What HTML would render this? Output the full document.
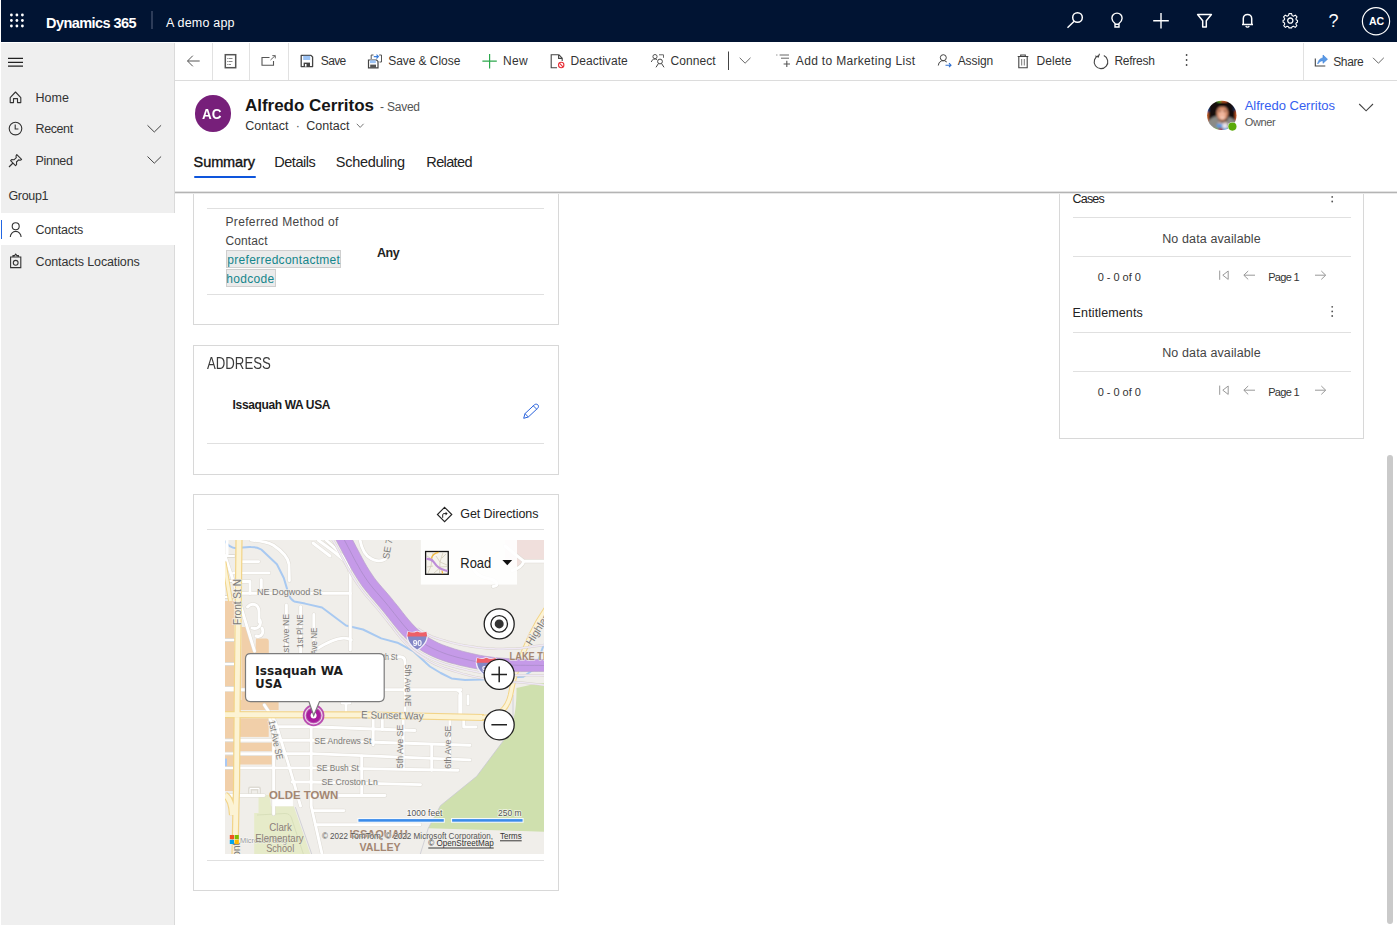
<!DOCTYPE html>
<html lang="en">
<head>
<meta charset="utf-8">
<title>Contact: Alfredo Cerritos - Dynamics 365</title>
<style>
*{box-sizing:border-box;margin:0;padding:0}
html,body{width:1397px;height:925px;overflow:hidden;background:#fff}
body{font-family:"Liberation Sans",sans-serif;color:#333;position:relative;font-size:13px}
.abs,.t,svg.i{position:absolute}
.t{white-space:nowrap;line-height:1;color:#333}
#top{position:absolute;left:1px;top:0;width:1396px;height:42px;background:#011433}
#side{position:absolute;left:1px;top:43px;width:174px;height:882px;background:#efefef;border-right:1px solid #dadada}
#side .sel{position:absolute;left:0;top:170px;width:174px;height:32px;background:#fff}
#side .selbar{position:absolute;left:0;top:177px;width:1px;height:19px;background:#2266e3}
#cmd{position:absolute;left:175px;top:43px;width:1222px;height:38px;background:#fff;border-bottom:1px solid #dcdcdc}
.vsep{position:absolute;top:43px;width:1px;height:37px;background:#e1e1e1}
#hdrshadow{position:absolute;left:175px;top:191px;width:1222px;height:3px;background:linear-gradient(#e3e3e3 0,#e3e3e3 33%,#b4b4b4 33%,#b4b4b4 66%,#e9e9e9 66%)}
.card{position:absolute;background:#fff;border:1px solid #d8d8d8}
.hl{position:absolute;height:1px;background:#e0e0e0}
.cb{font-size:12.5px;color:#333}
.nav{font-size:13px;color:#333}
</style>
</head>
<body>
<!-- TOP BAR -->
<div id="top"></div>
<!-- SIDEBAR -->
<div id="side"><div class="sel"></div><div class="selbar"></div></div>
<!-- COMMAND BAR -->
<div id="cmd"></div>
<div id="hdrshadow"></div>
<!--TOPCONTENT-->
<svg class="i" style="left:0;top:0" width="1397" height="44" viewBox="0 0 1397 44" fill="none" stroke="#fff" stroke-width="1.5">
<g fill="#fff" stroke="none">
<circle cx="11.4" cy="15" r="1.4"/><circle cx="16.9" cy="15" r="1.4"/><circle cx="22.4" cy="15" r="1.4"/>
<circle cx="11.4" cy="20.5" r="1.4"/><circle cx="16.9" cy="20.5" r="1.4"/><circle cx="22.4" cy="20.5" r="1.4"/>
<circle cx="11.4" cy="26" r="1.4"/><circle cx="16.9" cy="26" r="1.4"/><circle cx="22.4" cy="26" r="1.4"/>
</g>
<rect x="151.5" y="11" width="1" height="18" fill="#5a6580" stroke="none"/>
<!-- search -->
<circle cx="1077.5" cy="17.5" r="4.8"/><path d="M1074.2 21.2 L1067.5 27.8"/>
<!-- bulb -->
<path d="M1115 23.600 C1113 21.800 1111.900 20.200 1111.900 18.200 A5.100 5.100 0 0 1 1122.100 18.200 C1122.100 20.200 1121 21.800 1119 23.600 V27 H1115 Z M1115 24.300 H1119" stroke-width="1.400"/>
<!-- plus -->
<path d="M1161 13 V28.5 M1153.2 20.8 H1168.8" stroke-width="1.4"/>
<!-- filter -->
<path d="M1197.6 14.5 H1211.4 L1206.3 20.8 V27 H1202.7 V20.8 Z" stroke-linejoin="round"/>
<!-- bell -->
<path d="M1243.3 24.3 V18.6 A4.2 4.2 0 0 1 1251.700 18.6 V24.3 M1242 24.6 H1253" /><path d="M1245.8 26 A1.8 1.8 0 0 0 1249.2 26" stroke-width="1.3"/>
<!-- gear -->
<g transform="translate(1290.3 20.6)" stroke-width="1.3"><circle r="2.6"/><path d="M-1.3 -7 H1.3 L1.8 -5 L3.2 -4.4 L5 -5.5 L6.7 -3.7 L5.6 -1.9 L6.1 -0.6 L7.2 -0.3 V1.6 L6.1 2 L5.5 3.4 L6.6 5.1 L4.9 6.8 L3.2 5.7 L1.8 6.2 L1.3 7.3 H-1.3 L-1.8 6.2 L-3.2 5.7 L-4.9 6.8 L-6.6 5.1 L-5.5 3.4 L-6.1 2 L-7.2 1.6 V-0.3 L-6.1 -0.6 L-5.6 -1.9 L-6.7 -3.7 L-5 -5.5 L-3.2 -4.4 L-1.8 -5 Z" stroke-linejoin="round" stroke-width="1.1"/></g>
<!-- avatar ring -->
<circle cx="1376" cy="21.3" r="13.6" stroke-width="1.2"/>
</svg>
<span class="t" style="left:46px;top:15.8px;font-size:14.5px;font-weight:bold;color:#fff;letter-spacing:-0.56px">Dynamics 365</span>
<span class="t" style="left:166px;top:16.8px;font-size:12.5px;color:#fff;letter-spacing:.2px">A demo app</span>
<span class="t" style="left:1328.500px;top:11.500px;font-size:18px;color:#fff">?</span>
<span class="t" style="left:1369px;top:16.300px;font-size:10.500px;font-weight:bold;color:#fff;letter-spacing:-.2px">AC</span>
<!--/TOPCONTENT-->
<!--SIDECONTENT-->
<svg class="i" style="left:0;top:44px" width="175" height="240" viewBox="0 44 175 240" fill="none" stroke="#333" stroke-width="1.1">
<!-- hamburger -->
<path d="M8 58.4 H23 M8 62.3 H23 M8 66.2 H23" stroke="#222" stroke-width="1.3"/>
<!-- home -->
<path d="M10.2 97.6 L15.5 92 L20.8 97.6 V102.6 H17.5 V98.6 H13.5 V102.6 H10.2 Z" stroke-linejoin="round"/>
<!-- clock -->
<circle cx="15.5" cy="128.6" r="6.3"/><path d="M15.2 124.6 V129 H18.4"/>
<!-- pin -->
<path d="M16.8 154.6 L21.6 159.4 L20.2 160.2 L18.6 159.9 L16.5 162 L16.6 164.6 L15.5 165.6 L10.6 160.6 L11.6 159.6 L14.2 159.7 L16.3 157.6 L16 156 Z M13 163 L9 167" stroke-linejoin="round"/>
<!-- chevrons -->
<path d="M147.5 125.3 L154.3 132 L161.100 125.3 M147.5 156.5 L154.3 163.2 L161.100 156.5" stroke="#444" stroke-width="1"/>
<!-- person -->
<circle cx="15.700" cy="226.300" r="3.5"/><path d="M10.3 237 A5.4 5.6 0 0 1 21.100 237"/>
<!-- clipboard -->
<path d="M10.6 257 H20.8 V267.6 H10.6 Z M13 257 V255.600 H14.500 L15.700 254.200 L16.900 255.600 H18.400 V257"/><circle cx="15.700" cy="262.800" r="2.400"/>
</svg>
<span class="t nav" style="left:35.5px;top:91.500px;font-size:12.5px">Home</span>
<span class="t nav" style="left:35.5px;top:123px;font-size:12.5px;letter-spacing:-.4px">Recent</span>
<span class="t nav" style="left:35.5px;top:154.500px;font-size:12.5px;letter-spacing:-.3px">Pinned</span>
<span class="t nav" style="left:8.500px;top:189.500px;font-size:12.5px;letter-spacing:-.35px">Group1</span>
<span class="t nav" style="left:35.5px;top:224.300px;font-size:12.5px;letter-spacing:-.22px">Contacts</span>
<span class="t nav" style="left:35.5px;top:255.800px;font-size:12.5px;letter-spacing:-.12px">Contacts Locations</span>
<!--/SIDECONTENT-->
<!--CMDCONTENT-->
<div class="vsep" style="left:212px"></div><div class="vsep" style="left:249px"></div><div class="vsep" style="left:288px"></div><div class="vsep" style="left:1303px"></div>
<svg class="i" style="left:175px;top:44px" width="1222" height="37" viewBox="175 44 1222 37" fill="none" stroke="#444" stroke-width="1">
<!-- back -->
<path d="M199.700 61 H187.600 M192.800 55.700 L187.500 61 L192.800 66.300" stroke="#555" stroke-width="1"/>
<!-- doc -->
<rect x="225.300" y="54.700" width="10.400" height="13" stroke="#555" stroke-width="1.5"/><path d="M228.500 58.500 H232.500 M228.500 61.500 H232.500 M228.500 64.500 H231 M227 58.500 h.8 M227 61.500 h.8 M227 64.500 h.8" stroke="#888" stroke-width="1"/>
<!-- popout -->
<path d="M269.500 57.500 H262 V65.300 H273.500 V61" stroke="#555" stroke-width="1.100"/><path d="M270.500 60 L275.200 55.600 M272.300 55.600 H275.300 V58.400" stroke="#666" stroke-width="1"/>
<!-- save -->
<path d="M301.200 55.400 H311 L312.600 57 V66.600 H301.200 Z" stroke="#444" stroke-width="1.300" stroke-linejoin="round"/><rect x="303.200" y="55.800" width="7" height="4.200" fill="#9cc3f5" stroke="none"/><rect x="303.600" y="62.600" width="6.400" height="4" fill="#444" stroke="none"/><rect x="305" y="64" width="1.500" height="2.600" fill="#fff" stroke="none"/>
<!-- save & close -->
<path d="M368.500 60 H376.600 L378 61.400 V67.800 H368.500 Z" stroke="#444" stroke-width="1.200"/><rect x="370" y="60.300" width="5.800" height="2.800" fill="#9cc3f5" stroke="none"/><rect x="370.200" y="64.600" width="5.800" height="3.200" fill="#555" stroke="none"/>
<path d="M371.200 59 V55 H373.500 M379.200 55 H381.500 V62 H379.500" stroke="#555" stroke-width="1"/><path d="M373.800 56.600 H378.200 M376.500 54.700 L378.400 56.600 L376.500 58.500" stroke="#3b7edb" stroke-width="1.100"/>
<!-- new -->
<path d="M489.600 54 V68.400 M482.400 61.200 H496.800" stroke="#2ca84c" stroke-width="1.200"/>
<!-- deactivate -->
<path d="M558.800 54.700 H551.200 V67.800 H557 M558.800 54.700 L562.200 58.200 V61 M558.600 54.900 V58.400 H562" stroke="#444" stroke-width="1.100"/><circle cx="561.200" cy="65" r="2.700" stroke="#e8313a" stroke-width="1.100"/><path d="M559.400 63.200 L563 66.800" stroke="#e8313a" stroke-width="1.100"/>
<!-- connect -->
<circle cx="655" cy="56.600" r="2.100" stroke="#555"/><path d="M651.300 62 A3.700 3.400 0 0 1 657 59.600" stroke="#555"/><circle cx="660" cy="61.500" r="2.400" stroke="#444"/><path d="M656 67.300 L658.400 63.600 M664 67.300 L661.600 63.600" stroke="#444"/><path d="M659 54.800 H663.500 V57.800" stroke="#666"/>
<rect x="728" y="51.500" width="1" height="18.500" fill="#444" stroke="none"/>
<path d="M739.700 57.800 L745.100 63.200 L750.500 57.800" stroke="#666" stroke-width="1"/>
<!-- add to marketing list -->
<path d="M779.600 55 H789 M781 58.200 H789" stroke="#666" stroke-width="1"/><path d="M776 55 h1.500" stroke="#999"/><path d="M786.800 60.800 V67 M783.600 64 H790" stroke="#555" stroke-width="1.100"/>
<!-- assign -->
<circle cx="943.300" cy="57.700" r="3" stroke="#444"/><path d="M938.300 65.500 A5 5 0 0 1 946.800 62" stroke="#444"/><path d="M945.500 65.200 H951 M949 63.200 L951 65.200 L949 67.200" stroke="#2f6fd0" stroke-width="1.100"/>
<!-- delete -->
<path d="M1017.700 56.500 H1028.300 M1020.700 56.300 V55 H1025.300 V56.300 M1018.800 56.800 V67.700 H1027.200 V56.800" stroke="#444" stroke-width="1.100"/><path d="M1021.700 59 V65.500 M1024.300 59 V65.500" stroke="#777" stroke-width="1"/>
<!-- refresh -->
<path d="M1098.700 55.400 A6.800 6.800 0 1 0 1103.800 55.600" stroke="#444" stroke-width="1.100"/><path d="M1098.300 53.500 V57 H1095" stroke="#444" stroke-width="1" transform="rotate(20 1098.300 57)"/>
<!-- more -->
<g fill="#444" stroke="none"><circle cx="1186.600" cy="55" r="0.900"/><circle cx="1186.600" cy="60" r="0.900"/><circle cx="1186.600" cy="65" r="0.900"/></g>
<!-- share -->
<path d="M1315.300 58.500 V66 H1325.300" stroke="#444" stroke-width="1.100"/><path d="M1317.700 64 C1318.300 60 1320.500 58.200 1323 58 V55 L1327.500 59.200 L1323 63.300 V60.700 C1321 60.700 1319.200 61.700 1317.700 64 Z" fill="#5a9ae6" stroke="#3c7fd6" stroke-width=".6"/>
<path d="M1373 57.800 L1378.400 63.200 L1383.800 57.800" stroke="#666" stroke-width="1"/>
</svg>
<span class="t cb" style="left:320.8px;top:54.9px;font-size:12px;letter-spacing:-0.62px">Save</span>
<span class="t cb" style="left:388.2px;top:54.9px;font-size:12px;letter-spacing:-0.05px">Save &amp; Close</span>
<span class="t cb" style="left:503.1px;top:54.9px;font-size:12px;letter-spacing:0.30px">New</span>
<span class="t cb" style="left:570.5px;top:54.9px;font-size:12px;letter-spacing:0.06px">Deactivate</span>
<span class="t cb" style="left:670.6px;top:54.9px;font-size:12px;letter-spacing:0.05px">Connect</span>
<span class="t cb" style="left:795.8px;top:54.9px;font-size:12px;letter-spacing:0.33px">Add to Marketing List</span>
<span class="t cb" style="left:957.7px;top:54.9px;font-size:12px;letter-spacing:-0.10px">Assign</span>
<span class="t cb" style="left:1036.5px;top:54.9px;font-size:12px;letter-spacing:0.04px">Delete</span>
<span class="t cb" style="left:1114.4px;top:54.9px;font-size:12px;letter-spacing:-0.24px">Refresh</span>
<span class="t cb" style="left:1333.2px;top:55.5px;font-size:12px;letter-spacing:-0.36px">Share</span>
<!--/CMDCONTENT-->
<!--HEADER-->
<div class="abs" style="left:194.600px;top:95px;width:36.600px;height:36.600px;border-radius:50%;background:#771f7a"></div>
<span class="t" style="left:202.200px;top:106.200px;font-size:15.5px;font-weight:bold;color:#fff;transform:scaleX(.87);transform-origin:0 0">AC</span>
<span class="t" style="left:245px;top:96.700px;font-size:17px;font-weight:bold;color:#161616;letter-spacing:-.03px">Alfredo Cerritos</span>
<span class="t" style="left:380px;top:100.800px;font-size:12px;color:#555;letter-spacing:-.22px">- Saved</span>
<span class="t" style="left:245.300px;top:119.600px;font-size:12.5px;color:#333">Contact</span>
<span class="t" style="left:295.700px;top:119.600px;font-size:12.5px;color:#555">·</span>
<span class="t" style="left:306.300px;top:119.600px;font-size:12.5px;color:#333">Contact</span>
<svg class="i" style="left:355px;top:121px" width="12" height="10" viewBox="355 121 12 10" fill="none" stroke="#777" stroke-width="1"><path d="M356.800 123.800 L360.200 127.400 L363.600 123.800"/></svg>
<span class="t" style="left:193.600px;top:155px;font-size:14.5px;color:#111;letter-spacing:-.1px;-webkit-text-stroke:.35px #111">Summary</span>
<span class="t" style="left:274.200px;top:155px;font-size:14.5px;color:#222;letter-spacing:-.45px">Details</span>
<span class="t" style="left:335.800px;top:155px;font-size:14.5px;color:#222;letter-spacing:-.27px">Scheduling</span>
<span class="t" style="left:426.300px;top:155px;font-size:14.5px;color:#222;letter-spacing:-.63px">Related</span>
<div class="abs" style="left:194px;top:176px;width:62px;height:2px;background:#0e55dc;border-radius:1px"></div>
<!-- owner -->
<svg class="i" style="left:1204px;top:98px" width="36" height="36" viewBox="1204 98 36 36">
<defs><clipPath id="pc"><circle cx="1221.800" cy="115.400" r="14.700"/></clipPath><filter id="pb" x="-10%" y="-10%" width="120%" height="120%"><feGaussianBlur stdDeviation="0.800"/></filter></defs>
<g clip-path="url(#pc)"><g filter="url(#pb)">
<rect x="1202" y="96" width="40" height="40" fill="#130f0f"/>
<rect x="1205.500" y="112" width="3" height="11" fill="#e07030"/><rect x="1205.500" y="106" width="3" height="6" fill="#2f66b8"/>
<rect x="1235.200" y="111" width="3" height="10" fill="#d8622a"/><rect x="1233.500" y="105" width="3" height="6" fill="#1e2f55"/>
<rect x="1217.500" y="99.500" width="3.500" height="2.600" fill="#6cc030"/><rect x="1221" y="99.500" width="6" height="2.600" fill="#d8602a"/>
<path d="M1206 131 L1208 121 C1211 118 1214 116.500 1217 116 L1220 124 L1226 124 L1228 117 C1231 117.500 1234 119 1236.500 122 L1238 131 Z" fill="#8b8a86"/>
<ellipse cx="1222.300" cy="113.600" rx="5.700" ry="7.400" fill="#d9906e"/>
<ellipse cx="1222" cy="114.500" rx="3.200" ry="4.500" fill="#f0b59c"/>
<path d="M1215 111 C1214.500 105 1217 103 1222.500 103.200 C1228 103.200 1230 105.500 1229.600 111 C1228.500 107.800 1226.500 106.600 1222.300 106.800 C1218 106.700 1216.200 108 1215 111 Z" fill="#120d0c"/>
<path d="M1219.500 117 Q1222.500 120 1225.500 117 Q1222.500 118.600 1219.500 117Z" fill="#fff"/><ellipse cx="1219.900" cy="111.300" rx="1.300" ry=".7" fill="#5a3324"/><ellipse cx="1224.700" cy="111.300" rx="1.300" ry=".7" fill="#5a3324"/>
<path d="M1218.500 120.500 L1222.500 122.500 L1226.500 120.500 L1227 126 L1218 126 Z" fill="#c9a898"/>
<rect x="1217" y="123.800" width="5.500" height="3.600" fill="#4f9be8"/><rect x="1222.500" y="123.500" width="5" height="5" fill="#e8e4f0"/>
<rect x="1214" y="128.600" width="4" height="2.500" fill="#6cc030"/><rect x="1218" y="128.600" width="5" height="2.500" fill="#a01840"/><rect x="1223" y="128.600" width="5" height="2.500" fill="#2a9be8"/>
</g></g>
<circle cx="1232.400" cy="126.600" r="4.700" fill="#fff" opacity=".85"/>
<circle cx="1232.400" cy="126.600" r="4.100" fill="#5bab08"/>
</svg>
<svg class="i" style="left:1355px;top:100px" width="22" height="14" viewBox="1355 100 22 14"><path d="M1359.200 104 L1366.100 110.800 L1373 104" fill="none" stroke="#444" stroke-width="1.100"/></svg>
<span class="t" style="left:1244.700px;top:98.500px;font-size:13px;color:#3560f0">Alfredo Cerritos</span>
<span class="t" style="left:1244.700px;top:117px;font-size:11px;color:#555;letter-spacing:-.33px">Owner</span>
<!--/HEADER-->
<!--CARDS-->
<!-- card 1 (scrolled) -->
<div class="card" style="left:193px;top:194px;width:365.500px;height:131px;border-top:none"></div>
<div class="hl" style="left:206.500px;top:208px;width:337.500px"></div>
<span class="t" style="left:225.500px;top:215.700px;font-size:12px;color:#444;letter-spacing:.34px">Preferred Method of</span>
<span class="t" style="left:225.500px;top:234.600px;font-size:12px;color:#444;letter-spacing:.12px">Contact</span>
<div class="abs" style="left:225.500px;top:249.700px;width:115.500px;height:18.300px;background:#ebebeb;border:1px solid #cfcfcf"></div>
<div class="abs" style="left:225.500px;top:268.800px;width:50px;height:18.200px;background:#ebebeb;border:1px solid #cfcfcf"></div>
<span class="t" style="left:227.300px;top:254px;font-size:12px;color:#14868c;letter-spacing:.29px">preferredcontactmet</span>
<span class="t" style="left:226.300px;top:272.800px;font-size:12px;color:#14868c;letter-spacing:.3px">hodcode</span>
<span class="t" style="left:377px;top:246.700px;font-size:12.5px;font-weight:bold;color:#222;letter-spacing:-.5px">Any</span>
<div class="hl" style="left:206.500px;top:294px;width:337.500px"></div>
<!-- card 2 -->
<div class="card" style="left:193px;top:345px;width:365.500px;height:130px"></div>
<span class="t" style="left:206.600px;top:356px;font-size:16.600px;color:#3a3a3a;transform:scaleX(.795);transform-origin:0 0">ADDRESS</span>
<span class="t" style="left:232.600px;top:398.600px;font-size:12px;font-weight:bold;color:#1b1b1b;letter-spacing:-.36px">Issaquah WA USA</span>
<svg class="i" style="left:520px;top:401px" width="22" height="21" viewBox="520 401 22 21" fill="none" stroke="#2a63dc" stroke-width="1"><path d="M523.700 418.300 L525 413.600 L534.300 404.900 C535.500 403.800 537.200 404 538 405 C538.800 406 538.600 407.400 537.600 408.300 L528.300 417 Z M525 413.600 L528.300 417 M533.300 405.800 L536.700 409.200"/></svg>
<div class="hl" style="left:206.500px;top:443px;width:337.500px"></div>
<!-- card 3 -->
<div class="card" style="left:193px;top:494px;width:365.500px;height:397px"></div>
<svg class="i" style="left:435px;top:505px" width="20" height="20" viewBox="435 505 20 20" fill="none" stroke="#222" stroke-width="1.100"><path d="M444.600 507.300 L451.800 514.500 L444.600 521.700 L437.400 514.500 Z"/><path d="M442.700 517.800 V514.800 Q442.700 513.600 443.900 513.600 H446.500" stroke-width="1"/><path d="M445.600 511.800 L447.600 513.600 L445.600 515.400 Z" fill="#222" stroke="none"/></svg>
<span class="t" style="left:460.300px;top:507.900px;font-size:12.5px;color:#222;letter-spacing:-.08px">Get Directions</span>
<div class="hl" style="left:206.500px;top:529px;width:337.500px"></div>
<div class="hl" style="left:206.500px;top:860px;width:337.500px"></div>
<!--/CARDS-->
<!--MAP-->
<svg class="i" style="left:225px;top:540px" width="319" height="314" viewBox="225 540 319 314" font-family="Liberation Sans, sans-serif">
<defs><clipPath id="mc"><rect x="225" y="540" width="319" height="314"/></clipPath>
<filter id="soft" x="-5%" y="-5%" width="110%" height="110%"><feGaussianBlur stdDeviation="0.35"/></filter></defs>
<g clip-path="url(#mc)">
<g filter="url(#soft)">
<rect x="225" y="540" width="319" height="314" fill="#f0eeea"/>
<!-- land use -->
<path d="M516.500 688 C516.500 700 516 710 513 721 L502.600 741.700 L476.700 776.300 L440.400 805.700 L428.300 828.200 L544.200 831.700 V683 L530 685 Z" fill="#cfe0ae"/>
<path d="M505 540 H544 V561.500 H524 Q521 567 515 570 L505 560 Z" fill="#f0dfdc"/>
<path d="M254.200 813 H258.500 V795 H269.700 L271 806.200 H293.700 L311 856 H254.200 Z" fill="#e6ebc9"/><path d="M257 815 L285 813.500 Q290 813.500 291.500 818 L304 856" fill="none" stroke="#d4dcb6" stroke-width=".8"/>
<g fill="#f1cfa9"><rect x="225" y="601" width="9" height="190"/><path d="M256 638.400 H266 Q268.800 638.400 268.800 641.500 V702 H241.500 V627 H249 L255.300 653 Z"/><rect x="239" y="700" width="39.600" height="10"/><rect x="239.700" y="718.400" width="29" height="18.500"/><rect x="239.700" y="742.700" width="33" height="8.400"/><rect x="239.700" y="756" width="32.500" height="8.500"/></g>
<!-- creek -->
<path d="M225 541 C228 546 231 548 236.200 548.200 C242 548 246 546.500 251 547 C256 547 259 548 261.300 549.500 L276.900 564.200 L283.800 578 L289 595.400 Q291 600 294.200 601.400 L305 603.600 L322 607.500 L334 616.500 L346 625.500 L363 629.500 L381.200 638.400 L397.400 642.700 L413.600 651.400 L429.900 666.500 L440.700 673 L451.500 678.400 L465 680 L481.900 679.400 L523.400 676.700 L535.500 668 L544 644" fill="none" stroke="#a8c9f1" stroke-width="2" stroke-linejoin="round"/>
<rect x="225" y="758.600" width="2" height="10" fill="#a9c8f5"/>
<!-- rail -->
<path d="M513 695 V721 L502.600 741.700 L476.700 776.300 L440.400 805.700 L428.300 828.200 L420 855 M295.400 807.200 L312 855" fill="none" stroke="#c9c9d2" stroke-width=".8"/>
<!-- streets casing -->
<g fill="none" stroke="#dedbd4" stroke-width="3.900" stroke-linecap="round" stroke-linejoin="round">
<path d="M242 593.400 H350.300"/>
<path d="M318 540 C340 556 350.300 562 350.300 577 V650 M326 540 C340 552 348 560 350 572 M313 543 L330 556" />
<path d="M351.300 640 C345 636 335 637 315 650"/>
<path d="M251 540 C262 541 268 542 273.400 545.200 C282 551 288 557 289 564.200 L289.400 580.600"/>
<path d="M242.300 561.600 H258.700 M233.600 572.900 H269 M261.300 579.800 V588.400 M242.300 581.500 H250 V593.600 M225 555.600 L233 580 L245 620 L254.500 651"/>
<path d="M247.500 607 C252 602 259 604 259 612 V622 M252 628 C257 630 262 626 260 620 M256 636 C262 638 264 632 262 628"/>
<path d="M286.400 605 V655 M300.600 606.600 V655 M313.800 614.400 V655"/>
<path d="M384 656.800 H400 Q405 657 405 662 V714"/>
<path d="M225 689.700 H461 M455 689.700 Q461 689.700 461 696 V714 M468 696 V704"/>
<path d="M225 556 H234 M225 581 H234 M225 597 H234 M225 640 H234 M225 664 H234 M225 688 H234 M225 740.200 H234 M225 753.600 H234 M225 767.900 H234"/>
<path d="M239 740.200 H311 L470 745.200 M239 753.600 H311 L470 759.900 M239 767.900 H311 L458 770.300 M292 782 H311 L420.500 784.600 M225 795.500 H264 M311 795.500 H385 M312.500 810.600 H344 M315.500 824.800 H420"/>
<path d="M278.500 726.800 H311 L415 730.500"/>
<path d="M268 711 L272.500 728 Q273.600 736 273.600 742 V814"/>
<path d="M264.400 705 L275.300 721.800 L287.700 761.900 L294.500 784.600 L300.500 806"/>
<path d="M311.200 728 V806 L322.500 856 M346 705 V714 M342 703 H350 M361.700 756 V795"/>
<path d="M403.200 718 V768 M449.900 718 V768 M431.700 745.200 V770.300 M459.700 695 V714 M463.700 720 V727 H476"/>
<path d="M373.200 718.900 V744.700 M382.300 719 V729.500"/>
<path d="M250 793 V788.500 H259 V793"/>
<path d="M544 561.300 H524 L505 546 M524 561.300 Q521.500 568 512 570.500 M474 570 C480 580 492 577 496 582 Q499 586 493 586.500" />

<path d="M360 540 C362 550 366 556 370.800 558.400 C375 561 381 562 385.500 559"/>
</g>
<g fill="none" stroke="#fff" stroke-width="2.900" stroke-linecap="round" stroke-linejoin="round">
<path d="M242 593.400 H350.300"/>
<path d="M318 540 C340 556 350.300 562 350.300 577 V650 M326 540 C340 552 348 560 350 572 M313 543 L330 556" />
<path d="M351.300 640 C345 636 335 637 315 650"/>
<path d="M251 540 C262 541 268 542 273.400 545.200 C282 551 288 557 289 564.200 L289.400 580.600"/>
<path d="M242.300 561.600 H258.700 M233.600 572.900 H269 M261.300 579.800 V588.400 M242.300 581.500 H250 V593.600 M225 555.600 L233 580 L245 620 L254.500 651"/>
<path d="M247.500 607 C252 602 259 604 259 612 V622 M252 628 C257 630 262 626 260 620 M256 636 C262 638 264 632 262 628"/>
<path d="M286.400 605 V655 M300.600 606.600 V655 M313.800 614.400 V655"/>
<path d="M384 656.800 H400 Q405 657 405 662 V714"/>
<path d="M225 689.700 H461 M455 689.700 Q461 689.700 461 696 V714 M468 696 V704"/>
<path d="M225 556 H234 M225 581 H234 M225 597 H234 M225 640 H234 M225 664 H234 M225 688 H234 M225 740.200 H234 M225 753.600 H234 M225 767.900 H234" stroke-width="2"/>
<path d="M239 740.200 H311 L470 745.200 M239 753.600 H311 L470 759.900 M239 767.900 H311 L458 770.300 M292 782 H311 L420.500 784.600 M225 795.500 H264 M311 795.500 H385 M312.500 810.600 H344 M315.500 824.800 H420"/>
<path d="M278.500 726.800 H311 L415 730.500"/>
<path d="M268 711 L272.500 728 Q273.600 736 273.600 742 V814"/>
<path d="M264.400 705 L275.300 721.800 L287.700 761.900 L294.500 784.600 L300.500 806"/>
<path d="M311.200 728 V806 L322.500 856 M346 705 V714 M342 703 H350 M361.700 756 V795"/>
<path d="M403.200 718 V768 M449.900 718 V768 M431.700 745.200 V770.300 M459.700 695 V714 M463.700 720 V727 H476"/>
<path d="M373.200 718.900 V744.700 M382.300 719 V729.500"/>
<path d="M250 793 V788.500 H259 V793" stroke-width="1"/>
<path d="M544 561.300 H524 L505 546 M524 561.300 Q521.500 568 512 570.500 M474 570 C480 580 492 577 496 582 Q499 586 493 586.500" />

<path d="M360 540 C362 550 366 556 370.800 558.400 C375 561 381 562 385.500 559"/>
</g>
<rect x="274.800" y="798.400" width="18.100" height="7.800" fill="#fff"/>
<!-- yellow roads -->
<g fill="none" stroke-linecap="butt" stroke-linejoin="round">
<path d="M239 540 L237.200 700 L236.500 790 L236 805 L235 855 M225 795 C230 798 232 806 232.500 815 M225 714.700 L360 714.900 L484 717.500" stroke="#f2d488" stroke-width="7.200"/>
<path d="M239 540 L237.200 700 L236.500 790 L236 805 L235 855 M225 795 C230 798 232 806 232.500 815 M225 714.700 L360 714.900 L484 717.500" stroke="#fcf3d4" stroke-width="4.800"/>
<path d="M482 717.500 C499 717.500 507.500 708 510.500 695 C512.500 684 514.500 675 517.500 668 C522 655 530 632 546 609" stroke="#f2d488" stroke-width="5.400"/><path d="M482 717.500 C499 717.500 507.500 708 510.500 695 C512.500 684 514.500 675 517.500 668 C522 655 530 632 546 609" stroke="#fcf3d4" stroke-width="3.400"/>
<path d="M227 540 V556" stroke="#fff" stroke-width="3"/><path d="M224 562 L230.500 601" stroke="#f2d488" stroke-width="5"/><path d="M224 562 L230.500 601" stroke="#fcf3d4" stroke-width="3"/>
</g>
<path d="M330.0 535.3 L332.2 539.0 L334.4 542.8 L336.6 546.7 L338.7 550.7 L340.8 554.7 L342.9 558.8 L345.1 562.9 L347.3 567.1 L349.6 571.2 L352.0 575.4 L354.6 579.5 L357.2 583.6 L360.1 587.6 L363.0 591.6 L366.1 595.4 L369.2 599.0 L372.2 602.5 L375.2 605.9 L378.1 609.3 L380.9 612.7 L383.7 616.2 L386.5 619.8 L389.3 623.4 L392.3 627.1 L395.3 630.8 L398.5 634.5 L401.9 638.2 L405.5 641.7 L409.4 645.2 L413.5 648.4 L417.7 651.3 L422.1 654.0 L426.6 656.5 L431.1 658.7 L435.7 660.7 L440.4 662.5 L445.0 664.1 L449.7 665.5 L454.4 666.8 L459.0 668.0 L463.6 669.1 L468.2 670.2 L472.9 671.1 L477.6 672.0 L482.4 672.8 L487.2 673.5 L492.0 674.0 L496.8 674.4 L501.5 674.8 L506.3 675.0 L511.0 675.1 L515.7 675.2 L520.4 675.3 L525.0 675.3 L529.6 675.4 L534.2 675.4 L538.7 675.4 L543.2 675.5 L547.7 675.6" fill="none" stroke="#d8d3ca" stroke-width="2.4"/>
<path d="M330.0 535.3 L332.2 539.0 L334.4 542.8 L336.6 546.7 L338.7 550.7 L340.8 554.7 L342.9 558.8 L345.1 562.9 L347.3 567.1 L349.6 571.2 L352.0 575.4 L354.6 579.5 L357.2 583.6 L360.1 587.6 L363.0 591.6 L366.1 595.4 L369.2 599.0 L372.2 602.5 L375.2 605.9 L378.1 609.3 L380.9 612.7 L383.7 616.2 L386.5 619.8 L389.3 623.4 L392.3 627.1 L395.3 630.8 L398.5 634.5 L401.9 638.2 L405.5 641.7 L409.4 645.2 L413.5 648.4 L417.7 651.3 L422.1 654.0 L426.6 656.5 L431.1 658.7 L435.7 660.7 L440.4 662.5 L445.0 664.1 L449.7 665.5 L454.4 666.8 L459.0 668.0 L463.6 669.1 L468.2 670.2 L472.9 671.1 L477.6 672.0 L482.4 672.8 L487.2 673.5 L492.0 674.0 L496.8 674.4 L501.5 674.8 L506.3 675.0 L511.0 675.1 L515.7 675.2 L520.4 675.3 L525.0 675.3 L529.6 675.4 L534.2 675.4 L538.7 675.4 L543.2 675.5 L547.7 675.6" fill="none" stroke="#efe8f6" stroke-width="1.500"/>
<path d="M417.9 628.6 L421.3 630.9 L424.8 633.0 L428.4 634.9 L432.2 636.6 L436.1 638.0 L440.0 639.3 L444.0 640.4 L448.0 641.6 L452.0 642.7 L456.1 643.7 L460.3 644.6 L464.6 645.4 L468.9 646.1 L473.3 646.8 L477.6 647.4 L481.9 647.9 L486.1 648.3 L490.3 648.6 L494.5 648.8 L498.7 648.9 L503.0 648.9 L507.3 648.8 L511.7 648.7 L516.2 648.5 L520.6 648.2 L525.2 647.6 L529.7 647.0 L534.4 646.3 L539.1 645.7 L543.8 645.1 L548.6 644.6" fill="none" stroke="#d8d3ca" stroke-width="2.4"/>
<path d="M417.9 628.6 L421.3 630.9 L424.8 633.0 L428.4 634.9 L432.2 636.6 L436.1 638.0 L440.0 639.3 L444.0 640.4 L448.0 641.6 L452.0 642.7 L456.1 643.7 L460.3 644.6 L464.6 645.4 L468.9 646.1 L473.3 646.8 L477.6 647.4 L481.9 647.9 L486.1 648.3 L490.3 648.6 L494.5 648.8 L498.7 648.9 L503.0 648.9 L507.3 648.8 L511.7 648.7 L516.2 648.5 L520.6 648.2 L525.2 647.6 L529.7 647.0 L534.4 646.3 L539.1 645.7 L543.8 645.1 L548.6 644.6" fill="none" stroke="#efe8f6" stroke-width="1.500"/>
<path d="M392.3 627.1 L395.1 631.0 L398.1 634.9 L401.3 638.7 L404.8 642.5 L408.5 646.2 L412.5 649.7 L416.6 653.0 L420.9 656.1 L425.3 658.9 L429.8 661.5 L434.4 663.9 L439.1 665.9 L443.8 667.8 L448.6 669.4 L453.3 670.9 L457.9 672.3 L462.6 673.7 L467.2 674.9 L471.9 676.1 L476.7 677.2 L481.6 678.2 L486.5 679.0 L491.4 679.8 L496.3 680.4 L501.2 681.0 L506.0 681.4 L510.8 681.8 L515.6 682.1 L520.3 682.4 L525.0 682.9 L529.6 683.4 L534.2 683.9 L538.6 684.4 L543.1 685.0 L547.4 685.6" fill="none" stroke="#d8d3ca" stroke-width="2.2"/>
<path d="M392.3 627.1 L395.1 631.0 L398.1 634.9 L401.3 638.7 L404.8 642.5 L408.5 646.2 L412.5 649.7 L416.6 653.0 L420.9 656.1 L425.3 658.9 L429.8 661.5 L434.4 663.9 L439.1 665.9 L443.8 667.8 L448.6 669.4 L453.3 670.9 L457.9 672.3 L462.6 673.7 L467.2 674.9 L471.9 676.1 L476.7 677.2 L481.6 678.2 L486.5 679.0 L491.4 679.8 L496.3 680.4 L501.2 681.0 L506.0 681.4 L510.8 681.8 L515.6 682.1 L520.3 682.4 L525.0 682.9 L529.6 683.4 L534.2 683.9 L538.6 684.4 L543.1 685.0 L547.4 685.6" fill="none" stroke="#efe8f6" stroke-width="1.300"/>
<path d="M332.3 533.8 L334.6 537.6 L336.8 541.5 L338.9 545.4 L341.1 549.4 L343.2 553.5 L345.3 557.5 L347.5 561.7 L349.7 565.8 L352.0 569.9 L354.4 574.0 L356.9 578.1 L359.5 582.1 L362.2 586.1 L365.2 589.9 L368.2 593.6 L371.2 597.2 L374.3 600.7 L377.3 604.2 L380.1 607.6 L383.0 611.0 L385.8 614.6 L388.6 618.1 L391.5 621.8 L394.4 625.4 L397.4 629.1 L400.5 632.7 L403.8 636.3 L407.4 639.8 L411.1 643.1 L415.1 646.2 L419.2 649.1 L423.4 651.7 L427.8 654.1 L432.2 656.2 L436.8 658.2 L441.3 659.9 L445.9 661.5 L450.5 662.9 L455.1 664.1 L459.7 665.3 L464.3 666.3 L468.9 667.3 L473.5 668.2 L478.2 669.0 L482.8 669.7 L487.6 670.3 L492.3 670.7 L497.0 671.1 L501.7 671.3 L506.4 671.5 L511.1 671.6 L515.8 671.6 L520.4 671.6 L525.0 671.5 L529.6 671.5 L534.2 671.4 L538.8 671.4 L543.3 671.4 L547.8 671.4 L548.2 659.8 L543.5 659.6 L538.9 659.5 L534.3 659.4 L529.7 659.3 L525.1 659.2 L520.5 659.0 L516.0 658.9 L511.5 658.7 L507.0 658.5 L502.5 658.2 L498.0 657.9 L493.6 657.4 L489.3 656.8 L484.9 656.2 L480.5 655.4 L476.2 654.5 L471.8 653.5 L467.5 652.5 L463.1 651.4 L458.8 650.2 L454.6 649.0 L450.4 647.6 L446.3 646.2 L442.3 644.7 L438.3 643.0 L434.5 641.1 L430.8 639.0 L427.2 636.8 L423.7 634.5 L420.5 631.9 L417.3 629.1 L414.3 626.1 L411.4 623.0 L408.6 619.7 L405.7 616.3 L402.9 612.7 L400.1 609.1 L397.3 605.5 L394.3 601.9 L391.4 598.2 L388.3 594.6 L385.3 591.1 L382.3 587.7 L379.4 584.3 L376.6 580.9 L374.0 577.5 L371.6 573.9 L369.2 570.3 L366.9 566.6 L364.7 562.7 L362.5 558.8 L360.4 554.8 L358.3 550.8 L356.1 546.7 L354.0 542.6 L351.8 538.5 L349.5 534.3 L347.2 530.2 L344.7 526.2Z" fill="#c59ae8"/>
<path d="M338.5 530.0 L340.9 533.9 L343.1 537.9 L345.4 541.9 L347.5 546.0 L349.7 550.1 L351.8 554.2 L353.9 558.2 L356.1 562.3 L358.4 566.3 L360.6 570.3 L363.0 574.2 L365.5 578.0 L368.1 581.8 L370.9 585.4 L373.8 589.0 L376.8 592.5 L379.8 595.9 L382.8 599.4 L385.8 602.9 L388.7 606.5 L391.5 610.0 L394.4 613.6 L397.2 617.2 L400.1 620.8 L403.0 624.4 L406.0 627.9 L409.1 631.2 L412.4 634.4 L415.8 637.5 L419.4 640.3 L423.2 642.9 L427.1 645.4 L431.1 647.6 L435.3 649.6 L439.5 651.4 L443.8 653.1 L448.1 654.6 L452.5 655.9 L456.9 657.2 L461.4 658.3 L465.9 659.4 L470.3 660.4 L474.8 661.3 L479.3 662.2 L483.9 662.9 L488.4 663.6 L493.0 664.1 L497.5 664.5 L502.1 664.8 L506.7 665.0 L511.3 665.1 L515.9 665.2 L520.5 665.3 L525.1 665.3 L529.7 665.4 L534.3 665.4 L538.9 665.4 L543.4 665.5 L548.0 665.6" fill="none" stroke="#ab8cc9" stroke-width=".8"/>
<path d="M332.3 533.8 L334.6 537.6 L336.8 541.5 L338.9 545.4 L341.1 549.4 L343.2 553.5 L345.3 557.5 L347.5 561.7 L349.7 565.8 L352.0 569.9 L354.4 574.0 L356.9 578.1 L359.5 582.1 L362.2 586.1 L365.2 589.9 L368.2 593.6 L371.2 597.2 L374.3 600.7 L377.3 604.2 L380.1 607.6 L383.0 611.0 L385.8 614.6 L388.6 618.1 L391.5 621.8 L394.4 625.4 L397.4 629.1 L400.5 632.7 L403.8 636.3 L407.4 639.8 L411.1 643.1 L415.1 646.2 L419.2 649.1 L423.4 651.7 L427.8 654.1 L432.2 656.2 L436.8 658.2 L441.3 659.9 L445.9 661.5 L450.5 662.9 L455.1 664.1 L459.7 665.3 L464.3 666.3 L468.9 667.3 L473.5 668.2 L478.2 669.0 L482.8 669.7 L487.6 670.3 L492.3 670.7 L497.0 671.1 L501.7 671.3 L506.4 671.5 L511.1 671.6 L515.8 671.6 L520.4 671.6 L525.0 671.5 L529.6 671.5 L534.2 671.4 L538.8 671.4 L543.3 671.4 L547.8 671.4" fill="none" stroke="#b9a3cc" stroke-width=".7"/>
<path d="M344.7 526.2 L347.2 530.2 L349.5 534.3 L351.8 538.5 L354.0 542.6 L356.1 546.7 L358.3 550.8 L360.4 554.8 L362.5 558.8 L364.7 562.7 L366.9 566.6 L369.2 570.3 L371.6 573.9 L374.0 577.5 L376.6 580.9 L379.4 584.3 L382.3 587.7 L385.3 591.1 L388.3 594.6 L391.4 598.2 L394.3 601.9 L397.3 605.5 L400.1 609.1 L402.9 612.7 L405.7 616.3 L408.6 619.7 L411.4 623.0 L414.3 626.1 L417.3 629.1 L420.5 631.9 L423.7 634.5 L427.2 636.8 L430.8 639.0 L434.5 641.1 L438.3 643.0 L442.3 644.7 L446.3 646.2 L450.4 647.6 L454.6 649.0 L458.8 650.2 L463.1 651.4 L467.5 652.5 L471.8 653.5 L476.2 654.5 L480.5 655.4 L484.9 656.2 L489.3 656.8 L493.6 657.4 L498.0 657.9 L502.5 658.2 L507.0 658.5 L511.5 658.7 L516.0 658.9 L520.5 659.0 L525.1 659.2 L529.7 659.3 L534.3 659.4 L538.9 659.5 L543.5 659.6 L548.2 659.8" fill="none" stroke="#b9a3cc" stroke-width=".7"/>

<!-- shields -->
<g>
<g><path d="M408 631.800 Q412.600 633.600 417.200 631.400 Q421.800 633.600 426.400 631.800 Q430 642 417.200 650.300 Q404.400 642 408 631.800Z" fill="#8487c6" stroke="#f0eef8" stroke-width="1.300"/>
<path d="M408 631.800 Q412.600 633.600 417.200 631.400 Q421.800 633.600 426.400 631.800 L427.200 636.400 H407.200Z" fill="#ee5e68"/>
<text x="417.300" y="645.600" font-size="8.500" font-weight="bold" fill="#f6f5fc" text-anchor="middle" letter-spacing="-.3">90</text></g>
<g transform="translate(69.200 26.300)"><path d="M408 631.800 Q412.600 633.600 417.200 631.400 Q421.800 633.600 426.400 631.800 Q430 642 417.200 650.300 Q404.400 642 408 631.800Z" fill="#8487c6" stroke="#f0eef8" stroke-width="1.300"/>
<path d="M408 631.800 Q412.600 633.600 417.200 631.400 Q421.800 633.600 426.400 631.800 L427.200 636.400 H407.200Z" fill="#ee5e68"/>
<text x="417.300" y="645.600" font-size="8.500" font-weight="bold" fill="#f6f5fc" text-anchor="middle" letter-spacing="-.3">90</text></g>
</g>
</g>
<!-- labels -->
<g fill="#7d7b78" font-size="9.500" stroke="#f0eeea" stroke-width="1.600" paint-order="stroke" stroke-opacity=".8">
<text x="257" y="594.700" textLength="64.500" lengthAdjust="spacingAndGlyphs" font-size="8.800">NE Dogwood St</text>
<text transform="translate(240.500 625) rotate(-90)" textLength="46" lengthAdjust="spacingAndGlyphs" font-size="10.500">Front St N</text>
<text transform="translate(289.400 657) rotate(-90)" textLength="43" lengthAdjust="spacingAndGlyphs">1st Ave NE</text>
<text transform="translate(303 648) rotate(-90)" textLength="33.500" lengthAdjust="spacingAndGlyphs">1st Pl NE</text>
<text transform="translate(316.600 670) rotate(-90)" textLength="42.500" lengthAdjust="spacingAndGlyphs">2nd Ave NE</text>
<text transform="translate(405 664.500) rotate(90)" textLength="42" lengthAdjust="spacingAndGlyphs">5th Ave NE</text>
<text x="383" y="659.500" font-size="8.500" textLength="14.500" lengthAdjust="spacingAndGlyphs">th St</text>
<text transform="translate(389 559.500) rotate(-80)">SE 7</text>
<text transform="translate(531.500 646) rotate(-58)" font-size="10.500">Highlands</text>
<text x="361.100" y="718.200" textLength="62.500" lengthAdjust="spacingAndGlyphs" font-size="10.400" transform="rotate(1.300 361 718)">E Sunset Way</text>
<text x="314.200" y="744.100" textLength="57.200" lengthAdjust="spacingAndGlyphs">SE Andrews St</text>
<text x="316.500" y="771" textLength="42.300" lengthAdjust="spacingAndGlyphs">SE Bush St</text>
<text x="321.600" y="785.300" textLength="56.100" lengthAdjust="spacingAndGlyphs">SE Croston Ln</text>
<text transform="translate(268.500 721) rotate(78)" textLength="40" lengthAdjust="spacingAndGlyphs">1st Ave SE</text>
<text transform="translate(403.300 768.200) rotate(-90)" textLength="43.600" lengthAdjust="spacingAndGlyphs">5th Ave SE</text>
<text transform="translate(451.300 768.700) rotate(-90)" textLength="43" lengthAdjust="spacingAndGlyphs">6th Ave SE</text>
<text x="344" y="701" font-size="8">3</text>
<text transform="translate(239.500 867) rotate(-90)" font-size="10.500">Front</text>
</g>
<g fill="#a38672" font-weight="bold" font-size="11.500" stroke="#f0eeea" stroke-width="1.500" paint-order="stroke" stroke-opacity=".7">
<text x="269" y="799" textLength="69.300" lengthAdjust="spacingAndGlyphs">OLDE TOWN</text>
<text x="349.500" y="838.300" textLength="58.300" lengthAdjust="spacingAndGlyphs">ISSAQUAH</text>
<text x="359.400" y="850.500" textLength="41.300" lengthAdjust="spacingAndGlyphs">VALLEY</text>
<text x="509.600" y="659.600" textLength="40" lengthAdjust="spacingAndGlyphs">LAKE TR</text>
</g>
<text x="240" y="842.800" font-size="8" fill="#9a9a9a" textLength="47" lengthAdjust="spacingAndGlyphs" stroke="#fff" stroke-width=".8" paint-order="stroke" stroke-opacity=".7">Microsoft Bing</text>
<g fill="#8b7f76" font-size="10.500" text-anchor="middle" stroke="#e8ecd4" stroke-width="1.200" paint-order="stroke" stroke-opacity=".6">
<text x="280.600" y="831.200" textLength="22.800" lengthAdjust="spacingAndGlyphs">Clark</text><text x="279.400" y="841.500" textLength="48.500" lengthAdjust="spacingAndGlyphs">Elementary</text><text x="280.200" y="852.200" textLength="28" lengthAdjust="spacingAndGlyphs">School</text>
</g>
<!-- ms logo -->
<rect x="229.800" y="835" width="4.200" height="4.200" fill="#f25022"/><rect x="234.600" y="835" width="4.200" height="4.200" fill="#7fba00"/><rect x="229.800" y="839.800" width="4.200" height="4.200" fill="#00a4ef"/><rect x="234.600" y="839.800" width="4.200" height="4.200" fill="#ffb900"/>

<!-- scale -->
<g stroke="#fff" stroke-width="1" fill="#3a8bea"><rect x="357.900" y="818.600" width="86.400" height="3.600"/><rect x="451.600" y="818.600" width="71.500" height="3.600"/></g>
<g font-size="8.500" fill="#555" text-anchor="end" stroke="#fff" stroke-width="1.500" paint-order="stroke" stroke-opacity=".7"><text x="442.300" y="816.100">1000 feet</text><text x="521.700" y="816.100">250 m</text></g>
<g font-size="8.500" fill="#555" stroke="#f0eeea" stroke-width="1.200" paint-order="stroke" stroke-opacity=".6">
<text x="321.900" y="838.600" textLength="171.200" lengthAdjust="spacingAndGlyphs">© 2022 TomTom, © 2022 Microsoft Corporation,</text>
<text x="500" y="838.600" textLength="21.700" lengthAdjust="spacingAndGlyphs" fill="#333">Terms</text>
<text x="428.300" y="846.200" textLength="65.400" lengthAdjust="spacingAndGlyphs" fill="#333">© OpenStreetMap</text>
</g>
<path d="M500 840.800 H521.700 M428.300 848 H493.700" stroke="#222" stroke-width=".9"/>
<!-- pin -->
<g filter="url(#soft)"><circle cx="313.600" cy="715.400" r="10.800" fill="#b440ab" opacity=".92"/><circle cx="313.600" cy="715.400" r="8.500" fill="none" stroke="#ecd3ea" stroke-width="1.200"/><circle cx="313.600" cy="715.400" r="6.900" fill="#a81f9c"/><circle cx="313.600" cy="715.400" r="3" fill="#fff"/></g>
<!-- popup -->
<path d="M250.500 653.600 H379.200 Q384.200 653.600 384.200 658.600 V696.600 Q384.200 701.600 379.200 701.600 H319.500 L313.700 715.500 L308.900 701.600 H250.500 Q245.500 701.600 245.500 696.600 V658.600 Q245.500 653.600 250.500 653.600 Z" fill="#fff" stroke="#7c7c7c" stroke-width="1.200"/>
<g font-family="DejaVu Sans, Liberation Sans, sans-serif" font-weight="bold" font-size="12.300" fill="#1d1d1d"><text x="255.300" y="674.500" textLength="87.600" lengthAdjust="spacingAndGlyphs">Issaquah WA</text><text x="255.300" y="687.800" textLength="26.500" lengthAdjust="spacingAndGlyphs">USA</text></g>
<!-- road dropdown -->
<rect x="420.800" y="540" width="96.200" height="44.600" fill="#fff" opacity=".9"/>
<g><rect x="424.300" y="550.200" width="25.200" height="25.400" fill="#fff" opacity=".8"/><rect x="425.600" y="551.500" width="22.650" height="22.800" fill="#f5f3ec" stroke="#151515" stroke-width="1.300"/>
<path d="M427 556 L433 560 M433 553 L431 566 L428 573 M436 556 L440 562 L447 565 M443 552.500 L440 562 L439.500 573 M446 554 L442 558 M427 567 L433 566 M440 567 L447 566.500 M434 573 L439.800 568" stroke="#cfc7b2" stroke-width=".7" fill="none"/>
<path d="M438.600 552.300 C434.500 553 432 555.500 431.300 558.600 M442 570.500 L442.600 573.600" stroke="#f0b840" stroke-width="1.300" fill="none"/>
<path d="M426.300 558.900 C430 558.600 432 559.800 433.600 561.800 C435.500 564.500 436.600 566 438.500 567.400 C441 569.300 444 570 447.600 571.200" stroke="#be8dd8" stroke-width="2.100" fill="none"/></g>
<text x="460.300" y="567.700" font-size="14.500" fill="#222" textLength="31" lengthAdjust="spacingAndGlyphs">Road</text>
<path d="M502.400 560 H512.200 L507.300 565.200 Z" fill="#111"/>
<!-- buttons -->
<g fill="#fff" stroke="#222" stroke-width="1.300"><circle cx="499.200" cy="623.900" r="15"/><circle cx="499.200" cy="674.400" r="15"/><circle cx="499.200" cy="724.800" r="15"/></g>
<circle cx="499.200" cy="623.900" r="8.300" fill="none" stroke="#222" stroke-width="1.300"/><circle cx="499.200" cy="623.900" r="4.500" fill="#333"/>
<path d="M491.400 674.400 H507 M499.200 666.600 V682.200 M491.400 724.800 H507" stroke="#222" stroke-width="1.500"/>
</g>
</svg>
<!--/MAP-->
<!--RIGHT-->
<div class="card" style="left:1059px;top:194px;width:304.800px;height:244.500px;border-top:none"></div>
<div class="abs" style="left:1060px;top:194px;width:300px;height:16px;overflow:hidden"><span class="t" style="left:12.500px;top:-1px;font-size:12.5px;color:#222;letter-spacing:-.8px">Cases</span></div>
<svg class="i" style="left:1328px;top:194px" width="8" height="130" viewBox="1328 194 8 130" fill="#555"><circle cx="1332.200" cy="196.900" r=".9"/><circle cx="1332.200" cy="201.500" r=".9"/><circle cx="1332.200" cy="306.800" r=".9"/><circle cx="1332.200" cy="311.400" r=".9"/><circle cx="1332.200" cy="316" r=".9"/></svg>
<div class="hl" style="left:1073px;top:217px;width:278px"></div>
<span class="t" style="left:1162.200px;top:232.500px;font-size:12.5px;color:#444;letter-spacing:.12px">No data available</span>
<div class="hl" style="left:1073px;top:256px;width:278px"></div>
<span class="t" style="left:1097.800px;top:272.200px;font-size:11px;color:#333;letter-spacing:-.05px">0 - 0 of 0</span>
<span class="t" style="left:1268.200px;top:272.200px;font-size:11px;color:#333;letter-spacing:-.7px">Page 1</span>
<svg class="i" style="left:1215px;top:266px" width="116" height="134" viewBox="1215 266 116 134" fill="none" stroke="#999" stroke-width="1">
<g><path d="M1219.700 270.600 V279.800 M1228.200 271 L1222.800 275.200 L1228.200 279.400 Z M1255 275.200 H1244 M1248.200 271 L1243.800 275.200 L1248.200 279.400 M1315 275.200 H1325.500 M1321.300 271 L1325.700 275.200 L1321.300 279.400"/></g>
<g transform="translate(0 115)"><path d="M1219.700 270.600 V279.800 M1228.200 271 L1222.800 275.200 L1228.200 279.400 Z M1255 275.200 H1244 M1248.200 271 L1243.800 275.200 L1248.200 279.400 M1315 275.200 H1325.500 M1321.300 271 L1325.700 275.200 L1321.300 279.400"/></g>
</svg>
<span class="t" style="left:1072.600px;top:307px;font-size:12.5px;color:#222;letter-spacing:.13px">Entitlements</span>
<div class="hl" style="left:1073px;top:332px;width:278px"></div>
<span class="t" style="left:1162.200px;top:347px;font-size:12.5px;color:#444;letter-spacing:.12px">No data available</span>
<div class="hl" style="left:1073px;top:371px;width:278px"></div>
<span class="t" style="left:1097.800px;top:386.500px;font-size:11px;color:#333;letter-spacing:-.05px">0 - 0 of 0</span>
<span class="t" style="left:1268.200px;top:386.500px;font-size:11px;color:#333;letter-spacing:-.7px">Page 1</span>
<!--/RIGHT-->
<div class="abs" style="left:1387px;top:454.5px;width:6px;height:469.5px;border-radius:3px;background:#cacaca"></div>
</body>
</html>
